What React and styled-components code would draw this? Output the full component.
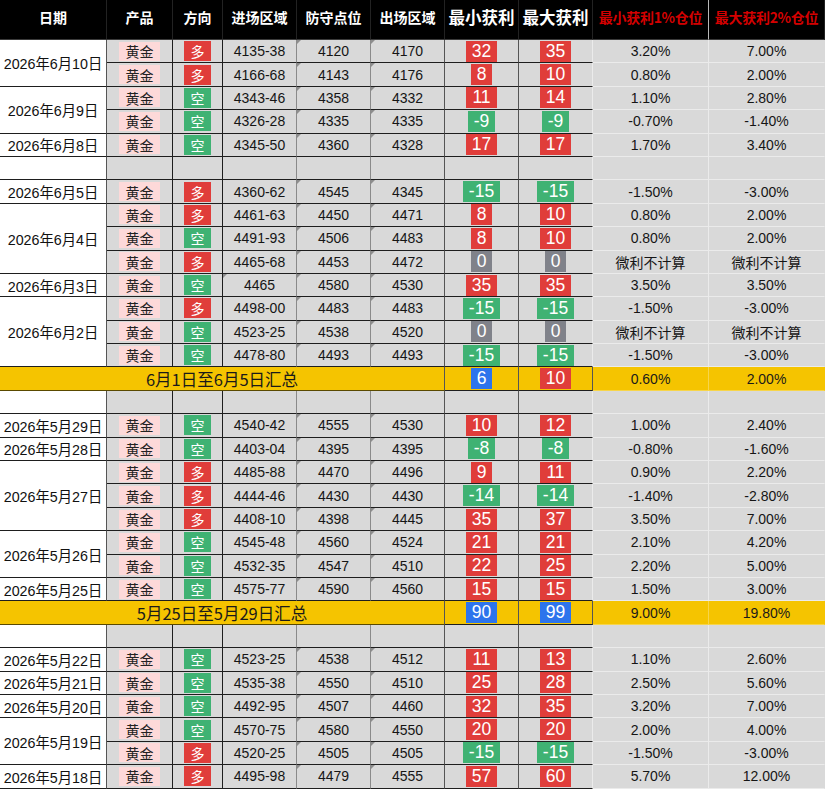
import React from "react";
import styled, { createGlobalStyle, css } from "styled-components";

const GlobalStyle = createGlobalStyle`
  html, body {
    margin: 0;
    padding: 0;
    background: #fff;
  }
  body {
    font-family: "Liberation Sans", "Noto Sans CJK SC", sans-serif;
  }
`;

const LINE = {
  dark: "#1e1e1e",
  soft: "#555",
  mid: "#8a8a8a",
  light: "#ebebeb",
  gold: "#f7d54a",
};

// right / bottom border per column
const RIGHT = [LINE.soft, LINE.dark, LINE.dark, LINE.mid, LINE.mid, LINE.soft, LINE.soft, LINE.light, LINE.light, "transparent"];
const BOTTOM = [LINE.dark, LINE.dark, LINE.dark, LINE.dark, LINE.dark, LINE.dark, LINE.dark, LINE.dark, LINE.light, LINE.light];

const TONES = {
  red: "#e03d3a",
  green: "#3fb273",
  gray: "#80828a",
  blue: "#2d74ec",
};

const HEAD = [
  { text: "日期", tone: "plain" },
  { text: "产品", tone: "plain" },
  { text: "方向", tone: "plain" },
  { text: "进场区域", tone: "plain" },
  { text: "防守点位", tone: "plain" },
  { text: "出场区域", tone: "plain" },
  { text: "最小获利", tone: "big" },
  { text: "最大获利", tone: "big" },
  { text: "最小获利1%仓位", tone: "red" },
  { text: "最大获利2%仓位", tone: "red" },
];

const NOTE = "微利不计算";

const SHEET = [
  { date: "2026年6月10日", rows: [
    ["多", "4135-38", "4120", "4170", 32, 35, "3.20%", "7.00%"],
    ["多", "4166-68", "4143", "4176", 8, 10, "0.80%", "2.00%"],
  ] },
  { date: "2026年6月9日", rows: [
    ["空", "4343-46", "4358", "4332", 11, 14, "1.10%", "2.80%"],
    ["空", "4326-28", "4335", "4335", -9, -9, "-0.70%", "-1.40%"],
  ] },
  { date: "2026年6月8日", rows: [
    ["空", "4345-50", "4360", "4328", 17, 17, "1.70%", "3.40%"],
  ] },
  { empty: true },
  { date: "2026年6月5日", rows: [
    ["多", "4360-62", "4545", "4345", -15, -15, "-1.50%", "-3.00%"],
  ] },
  { date: "2026年6月4日", rows: [
    ["多", "4461-63", "4450", "4471", 8, 10, "0.80%", "2.00%"],
    ["空", "4491-93", "4506", "4483", 8, 10, "0.80%", "2.00%"],
    ["多", "4465-68", "4453", "4472", 0, 0, NOTE, NOTE],
  ] },
  { date: "2026年6月3日", rows: [
    ["空", "4465", "4580", "4530", 35, 35, "3.50%", "3.50%"],
  ] },
  { date: "2026年6月2日", rows: [
    ["多", "4498-00", "4483", "4483", -15, -15, "-1.50%", "-3.00%"],
    ["空", "4523-25", "4538", "4520", 0, 0, NOTE, NOTE],
    ["空", "4478-80", "4493", "4493", -15, -15, "-1.50%", "-3.00%"],
  ] },
  { sum: "6月1日至6月5日汇总", min: [6, "blue"], max: [10, "red"], p1: "0.60%", p2: "2.00%" },
  { empty: true },
  { date: "2026年5月29日", rows: [
    ["空", "4540-42", "4555", "4530", 10, 12, "1.00%", "2.40%"],
  ] },
  { date: "2026年5月28日", rows: [
    ["空", "4403-04", "4395", "4395", -8, -8, "-0.80%", "-1.60%"],
  ] },
  { date: "2026年5月27日", rows: [
    ["多", "4485-88", "4470", "4496", 9, 11, "0.90%", "2.20%"],
    ["多", "4444-46", "4430", "4430", -14, -14, "-1.40%", "-2.80%"],
    ["多", "4408-10", "4398", "4445", 35, 37, "3.50%", "7.00%"],
  ] },
  { date: "2026年5月26日", rows: [
    ["空", "4545-48", "4560", "4524", 21, 21, "2.10%", "4.20%"],
    ["空", "4532-35", "4547", "4510", 22, 25, "2.20%", "5.00%"],
  ] },
  { date: "2026年5月25日", rows: [
    ["空", "4575-77", "4590", "4560", 15, 15, "1.50%", "3.00%"],
  ] },
  { sum: "5月25日至5月29日汇总", min: [90, "blue"], max: [99, "blue"], p1: "9.00%", p2: "19.80%" },
  { empty: true },
  { date: "2026年5月22日", rows: [
    ["空", "4523-25", "4538", "4512", 11, 13, "1.10%", "2.60%"],
  ] },
  { date: "2026年5月21日", rows: [
    ["空", "4535-38", "4550", "4510", 25, 28, "2.50%", "5.60%"],
  ] },
  { date: "2026年5月20日", rows: [
    ["空", "4492-95", "4507", "4460", 32, 35, "3.20%", "7.00%"],
  ] },
  { date: "2026年5月19日", rows: [
    ["空", "4570-75", "4580", "4550", 20, 20, "2.00%", "4.00%"],
    ["多", "4520-25", "4505", "4505", -15, -15, "-1.50%", "-3.00%"],
  ] },
  { date: "2026年5月18日", rows: [
    ["多", "4495-98", "4479", "4555", 57, 60, "5.70%", "12.00%"],
  ] },
];

const toneOf = (n) => (n > 0 ? "red" : n < 0 ? "green" : "gray");

export default function App() {
  const cells = [];

  HEAD.forEach((h, i) => (
    cells.push(
      <HeadCell key={`h${i}`} $tone={h.tone} $last={i === HEAD.length - 1}>
        {h.text}
      </HeadCell>
    )
  ));

  SHEET.forEach((block, b) => {
    if (block.empty) {
      cells.push(<DateCell key={`e${b}`} $span={1} />);
      for (let c = 1; c < 10; c++) {
        cells.push(<Cell key={`e${b}-${c}`} $right={RIGHT[c]} $bottom={BOTTOM[c]} />);
      }
      return;
    }

    if (block.sum) {
      cells.push(<SumLabel key={`s${b}`}>{block.sum}</SumLabel>);
      cells.push(
        <SumCell key={`s${b}-min`} $right={LINE.soft} $bottom={LINE.dark}>
          <Profit $tone={block.min[1]}>{block.min[0]}</Profit>
        </SumCell>
      );
      cells.push(
        <SumCell key={`s${b}-max`} $right={LINE.soft} $bottom={LINE.dark}>
          <Profit $tone={block.max[1]}>{block.max[0]}</Profit>
        </SumCell>
      );
      cells.push(<SumCell key={`s${b}-p1`} $right={LINE.gold} $bottom={LINE.gold}>{block.p1}</SumCell>);
      cells.push(<SumCell key={`s${b}-p2`} $right="transparent" $bottom={LINE.gold}>{block.p2}</SumCell>);
      return;
    }

    block.rows.forEach((r, i) => {
      const [dir, entry, guard, exit, min, max, p1, p2] = r;
      const k = `${b}-${i}`;
      if (i === 0) {
        cells.push(<DateCell key={`d${k}`} $span={block.rows.length}>{block.date}</DateCell>);
      }
      cells.push(
        <Cell key={`p${k}`} $right={RIGHT[1]} $bottom={BOTTOM[1]}>
          <Product>黄金</Product>
        </Cell>
      );
      cells.push(
        <Cell key={`dir${k}`} $right={RIGHT[2]} $bottom={BOTTOM[2]}>
          <Direction $short={dir === "空"}>{dir}</Direction>
        </Cell>
      );
      cells.push(
        <Cell key={`en${k}`} $right={RIGHT[3]} $bottom={BOTTOM[3]} $flag={!entry.includes("-")}>
          {entry}
        </Cell>
      );
      cells.push(<Cell key={`g${k}`} $right={RIGHT[4]} $bottom={BOTTOM[4]} $flag>{guard}</Cell>);
      cells.push(<Cell key={`x${k}`} $right={RIGHT[5]} $bottom={BOTTOM[5]} $flag>{exit}</Cell>);
      cells.push(
        <Cell key={`mn${k}`} $right={RIGHT[6]} $bottom={BOTTOM[6]}>
          <Profit $tone={toneOf(min)}>{min}</Profit>
        </Cell>
      );
      cells.push(
        <Cell key={`mx${k}`} $right={RIGHT[7]} $bottom={BOTTOM[7]}>
          <Profit $tone={toneOf(max)}>{max}</Profit>
        </Cell>
      );
      cells.push(<Cell key={`a${k}`} $right={RIGHT[8]} $bottom={BOTTOM[8]}>{p1}</Cell>);
      cells.push(<Cell key={`z${k}`} $right={RIGHT[9]} $bottom={BOTTOM[9]}>{p2}</Cell>);
    });
  });

  return (
    <>
      <GlobalStyle />
      <Sheet>{cells}</Sheet>
    </>
  );
}

const Sheet = styled.div`
  display: grid;
  grid-template-columns: 107px 66px 50px 74px 74px 74px 74px 74px 116px 116px;
  grid-template-rows: 40px;
  grid-auto-rows: 23.4px;
  width: 825px;
  height: 789px;
  overflow: hidden;
`;

const HeadCell = styled.div`
  box-sizing: border-box;
  display: flex;
  align-items: center;
  justify-content: center;
  padding-bottom: 5px;
  background: #000;
  border-bottom: 1px solid #3a3a3a;
  border-right: 1px solid ${(p) => (p.$tone === "red" && !p.$last ? "#b8b8b8" : "#222")};
  color: ${(p) => (p.$tone === "red" ? "#d40000" : "#fff")};
  font-family: "Noto Sans CJK SC", "Liberation Sans", sans-serif;
  font-weight: 700;
  font-size: ${(p) => (p.$tone === "big" ? "16.5px" : "14px")};
  white-space: nowrap;
  letter-spacing: ${(p) => (p.$tone === "red" ? "-0.3px" : "0")};
`;

const Cell = styled.div`
  position: relative;
  box-sizing: border-box;
  display: flex;
  align-items: center;
  justify-content: center;
  background: #d9d9d9;
  border-right: 1px solid ${(p) => p.$right};
  border-bottom: 1px solid ${(p) => p.$bottom};
  color: #151515;
  font-size: 14px;
  white-space: nowrap;

  ${(p) =>
    p.$flag &&
    css`
      &::before {
        content: "";
        position: absolute;
        left: 0;
        top: 0;
        border-top: 4px solid #8d8d8d;
        border-right: 4px solid transparent;
      }
    `}
`;

const DateCell = styled.div`
  box-sizing: border-box;
  grid-row: span ${(p) => p.$span};
  display: flex;
  align-items: center;
  justify-content: center;
  background: #fff;
  border-right: 1px solid ${LINE.soft};
  border-bottom: 1px solid ${LINE.dark};
  color: #111;
  font-size: 14.3px;
  white-space: nowrap;
`;

const SumLabel = styled.div`
  box-sizing: border-box;
  grid-column: span 6;
  display: flex;
  align-items: center;
  justify-content: center;
  background: #f5c400;
  border-right: 1px solid ${LINE.soft};
  border-bottom: 1px solid #5a4a00;
  color: #1a1a1a;
  font-family: "Noto Sans CJK SC", "Liberation Sans", sans-serif;
  font-size: 16.5px;
`;

const SumCell = styled.div`
  box-sizing: border-box;
  display: flex;
  align-items: center;
  justify-content: center;
  background: #f5c400;
  border-right: 1px solid ${(p) => p.$right};
  border-bottom: 1px solid ${(p) => p.$bottom};
  color: #1a1a1a;
  font-size: 14px;
`;

const Product = styled.span`
  display: flex;
  align-items: center;
  justify-content: center;
  width: 41px;
  height: 19px;
  background: #fdd9d9;
  color: #222;
  font-family: "Noto Sans CJK SC", sans-serif;
  font-size: 14px;
`;

const Direction = styled.span`
  display: flex;
  align-items: center;
  justify-content: center;
  width: 27px;
  height: 20px;
  background: ${(p) => (p.$short ? "#3fb273" : "#e03d3a")};
  color: #fff;
  font-family: "Noto Sans CJK SC", sans-serif;
  font-size: 14px;
`;

const Profit = styled.span`
  box-sizing: border-box;
  min-width: 21px;
  height: 21px;
  padding: 0 6px;
  background: ${(p) => TONES[p.$tone]};
  color: #fff;
  font-size: 17.5px;
  line-height: 21px;
  text-align: center;
`;
